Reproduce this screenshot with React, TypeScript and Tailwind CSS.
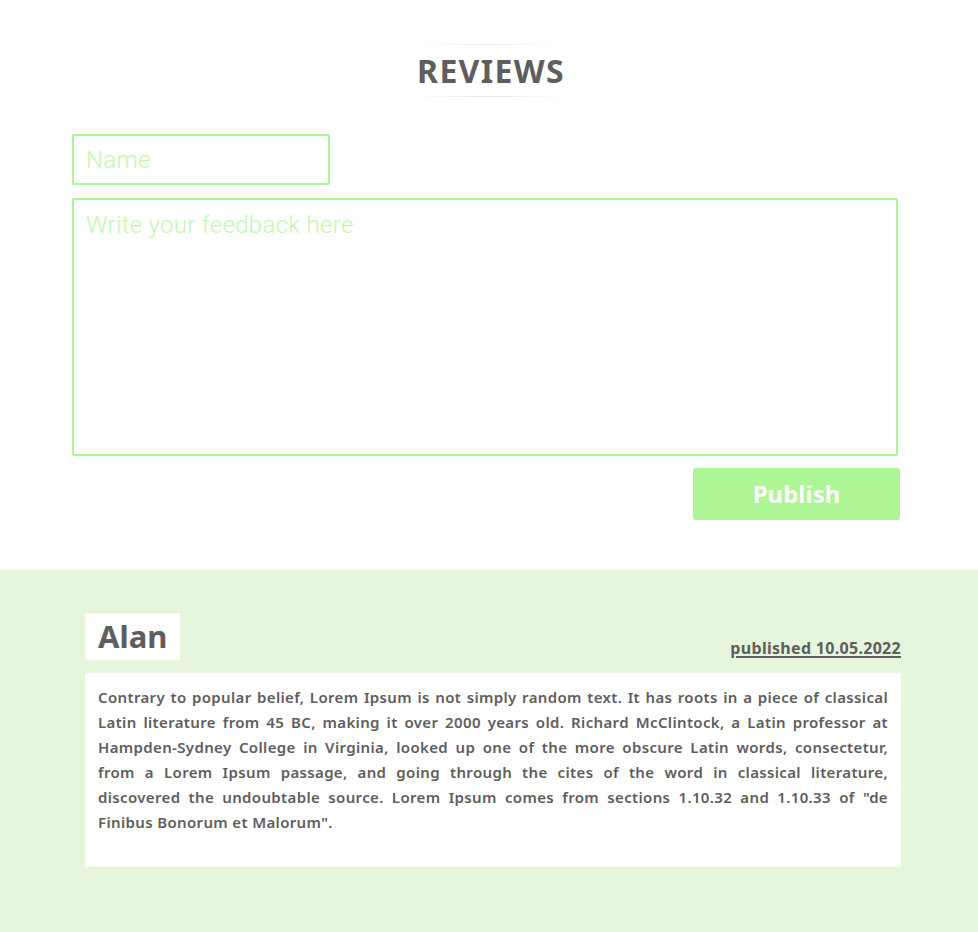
import React from "react";

const lines = [
  "Contrary to popular belief, Lorem Ipsum is not simply random text. It has roots in a piece of classical",
  "Latin literature from 45 BC, making it over 2000 years old. Richard McClintock, a Latin professor at",
  "Hampden-Sydney College in Virginia, looked up one of the more obscure Latin words, consectetur,",
  "from a Lorem Ipsum passage, and going through the cites of the word in classical literature,",
  'discovered the undoubtable source. Lorem Ipsum comes from sections 1.10.32 and 1.10.33 of "de',
];
const lastLine = 'Finibus Bonorum et Malorum".';

export default function App() {
  return (
    <div className="w-[978px] min-h-[932px] bg-white text-[#5f5d5d] font-['Noto_Sans',sans-serif]">
      <div className="pt-[44px] flex justify-center">
        <div className="w-[160px] flex flex-col items-center">
          <div className="h-[1px] w-full bg-gradient-to-r from-transparent via-[#ececec] to-transparent" />
          <h1 className="h-[51px] flex items-center justify-center text-[32px] font-bold tracking-[1.3px] pl-[4px]">
            REVIEWS
          </h1>
          <div className="h-[1px] w-full bg-gradient-to-r from-transparent via-[#e6e6e6] to-transparent" />
        </div>
      </div>
      <div className="px-[72px] pt-[37px] pb-[50px] flex flex-col">
        <input
          placeholder="Name"
          className="w-[258px] h-[51px] border-2 border-[#aef595] rounded-[2px] px-[12px] text-[24px] font-['Roboto',sans-serif] font-light tracking-[0.3px] outline-none placeholder:text-[#c2f7b0]"
        />
        <textarea
          placeholder="Write your feedback here"
          className="mt-[13px] w-[826px] h-[258px] border-2 border-[#aef595] rounded-[2px] px-[12px] py-[7px] text-[24px] font-['Roboto',sans-serif] font-light tracking-[0.3px] outline-none resize-none placeholder:text-[#c2f7b0]"
        />
        <div className="flex justify-end mt-[12px] mr-[6px]">
          <button className="w-[207px] h-[52px] bg-[#aef595] rounded-[3px] text-white text-[24px] font-bold">
            Publish
          </button>
        </div>
      </div>
      <div className="bg-[#e6f6dc] px-[85px] pt-[43px] pb-[66px]">
        <div className="w-[816px] flex items-end justify-between">
          <div className="bg-white h-[47px] px-[13px] flex items-center text-[31px] font-bold">
            Alan
          </div>
          <a href="#" className="text-[16px] font-bold tracking-[0.3px] underline underline-offset-2 decoration-[1.5px] mb-0">
            published 10.05.2022
          </a>
        </div>
        <div className="mt-[13px] w-[816px] h-[194px] bg-white rounded-[2px] px-[13px] pt-[12px]">
          <div className="text-[15px] font-semibold leading-[25px] tracking-[0.35px]">
            {lines.map((l) => (
              <p key={l} className="text-justify [text-align-last:justify] whitespace-nowrap">
                {l}
              </p>
            ))}
            <p>{lastLine}</p>
          </div>
        </div>
      </div>
    </div>
  );
}
